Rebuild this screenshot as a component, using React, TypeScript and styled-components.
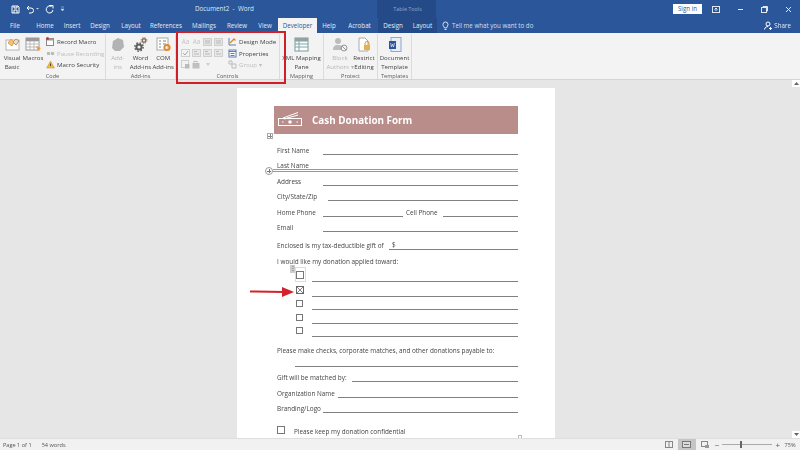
import * as React from 'react'
import styled, { createGlobalStyle } from 'styled-components'

const Global = createGlobalStyle`
  html, body { margin: 0; padding: 0; width: 800px; height: 450px; overflow: hidden; }
  body { font-family: "Open Sans", "Liberation Sans", sans-serif; background: #e6e6e6; }
`

const Root = styled.div`
  position: relative;
  width: 800px;
  height: 450px;
  display: flex;
  flex-direction: column;
  overflow: hidden;
  filter: blur(0.3px);
`

const TitleBar = styled.div`
  height: 18px;
  background: #2b579a;
  color: #dfe7f3;
  display: flex;
  align-items: center;
  font-size: 6.3px;
`

const Qat = styled.div`
  width: 377px;
  display: flex;
  align-items: center;
  gap: 6px;
  padding-left: 11px;
  box-sizing: border-box;
`

const DocTitle = styled.div`
  position: absolute;
  left: 195px;
  top: 3px;
  line-height: 11px;
  white-space: pre;
`

const ContextTitle = styled.div`
  width: 59px;
  height: 18px;
  background: #244b87;
  color: #8fa7cc;
  font-size: 5.4px;
  line-height: 18px;
  text-align: center;
  padding-left: 2px;
  box-sizing: border-box;
`

const WindowControls = styled.div`
  margin-left: auto;
  display: flex;
  align-items: center;
  height: 18px;
`

const SignIn = styled.div`
  width: 29px;
  height: 10px;
  background: #fff;
  color: #2b579a;
  font-size: 6.2px;
  line-height: 10px;
  text-align: center;
  margin-right: 2px;
`

const WinButton = styled.div`
  width: 24px;
  display: flex;
  justify-content: center;
`

const TabBar = styled.div`
  height: 15px;
  background: #2b579a;
  display: flex;
  align-items: stretch;
  font-size: 6.2px;
  color: #e4ebf5;
`

const Tab = styled.div<{ $w: number; $active?: boolean; $context?: boolean }>`
  width: ${p => p.$w}px;
  text-align: center;
  line-height: 15px;
  white-space: nowrap;
  background: ${p => (p.$active ? '#f3f3f3' : p.$context ? '#244b87' : 'transparent')};
  color: ${p => (p.$active ? '#2b579a' : 'inherit')};
`

const TellMe = styled.div`
  margin-left: 5px;
  display: flex;
  align-items: center;
  gap: 3px;
  line-height: 15px;
  color: #d5dff0;
`

const Share = styled.div`
  margin-left: auto;
  padding-right: 9px;
  display: flex;
  align-items: center;
  gap: 2px;
`

const Ribbon = styled.div`
  height: 47px;
  box-sizing: border-box;
  background: #f3f3f3;
  border-bottom: 1px solid #d4d4d4;
  display: flex;
  font-size: 6.1px;
  color: #444;
  position: relative;
`

const Group = styled.div<{ $w: number }>`
  width: ${p => p.$w}px;
  box-sizing: border-box;
  height: 45px;
  margin-top: 1px;
  border-right: 1px solid #dcdcdc;
  display: flex;
  flex-direction: column;
`

const GroupBody = styled.div<{ $pad?: number }>`
  flex: 1;
  display: flex;
  padding-left: ${p => p.$pad ?? 0}px;
`

const GroupLabel = styled.div`
  height: 10px;
  line-height: 11px;
  font-size: 5.6px;
  text-align: center;
  color: #5a5a5a;
  white-space: nowrap;
`

const BigButton = styled.div<{ $w: number; $off?: boolean }>`
  width: ${p => p.$w}px;
  display: flex;
  flex-direction: column;
  align-items: center;
  color: ${p => (p.$off ? '#b5b5b5' : '#444')};
  white-space: pre;
  text-align: center;
  line-height: 8.5px;
  padding-top: 3px;
  svg { margin-bottom: 2px; flex: none; }
`

const SmallColumn = styled.div<{ $left?: number }>`
  display: flex;
  flex-direction: column;
  margin-left: ${p => p.$left ?? 0}px;
  padding-top: 2px;
  gap: 0;
`

const SmallButton = styled.div<{ $off?: boolean }>`
  height: 11.5px;
  display: flex;
  align-items: center;
  gap: 2px;
  white-space: nowrap;
  color: ${p => (p.$off ? '#bdbdbd' : '#444')};
`

const ControlGrid = styled.div`
  display: grid;
  grid-template-columns: repeat(4, 11px);
  grid-auto-rows: 11.5px;
  align-items: center;
  justify-items: center;
  padding-top: 2px;
  margin-left: 4px;
  width: 48px;
`

const FontGlyph = styled.span`
  color: #c4c4c4;
  font-size: 6.5px;
`

const DocArea = styled.div`
  flex: 1;
  min-height: 0;
  display: flex;
  background: #e6e6e6;
  position: relative;
`

const Page = styled.div`
  width: 318px;
  margin: 8px 0 0 237px;
  background: #fff;
  overflow: hidden;
  padding: 18px 37px 0;
  box-sizing: border-box;
  flex: none;
  position: relative;
  font-size: 6.4px;
  color: #444;
`

const Banner = styled.div`
  height: 28px;
  background: #b98d8a;
  display: flex;
  align-items: center;
  color: #fff;
  font-weight: 700;
  font-size: 9.9px;
  padding-left: 4px;
  gap: 10px;
`

const Row = styled.div<{ $h?: number; $pad?: number }>`
  height: ${p => p.$h ?? 15.4}px;
  display: flex;
  align-items: flex-end;
  padding-left: ${p => p.$pad ?? 3}px;
  white-space: nowrap;
`

const Label = styled.div<{ $w?: number; $gap?: number }>`
  width: ${p => (p.$w ? `${p.$w}px` : 'auto')};
  flex: none;
  box-sizing: border-box;
  line-height: 9px;
  padding-left: ${p => p.$gap ?? 0}px;
`

const Line = styled.div<{ $w?: number }>`
  flex: ${p => (p.$w ? 'none' : 1)};
  width: ${p => (p.$w ? `${p.$w}px` : 'auto')};
  border-bottom: 1px solid #808080;
  line-height: 9px;
  padding-left: 3px;
  box-sizing: border-box;
`

const Box = styled.div<{ $w: number }>`
  width: ${p => p.$w}px;
  flex: none;
  display: flex;
  align-items: center;
  height: 9px;
  margin-bottom: 2px;
`

const Square = styled.div<{ $size?: number }>`
  width: ${p => p.$size ?? 7}px;
  height: ${p => p.$size ?? 7}px;
  border: 1px solid #777;
  box-sizing: border-box;
  background: #fff;
  flex: none;
`

const Control = styled.div`
  position: absolute;
  left: 58px;
  top: 179px;
  width: 11px;
  height: 15px;
  border: 1px solid #ddd;
  box-sizing: border-box;
`

const ControlTag = styled.div`
  position: absolute;
  left: 53px;
  top: 177px;
  width: 5px;
  height: 8px;
  background: #ccc;
  color: #555;
  font-size: 6px;
  line-height: 7px;
  text-align: center;
`

const MoveHandle = styled.div`
  position: absolute;
  left: 30px;
  top: 45px;
  width: 6px;
  height: 6px;
  border: 1px solid #aaa;
  box-sizing: border-box;
  background:
    linear-gradient(#888, #888) center / 4px 1px no-repeat,
    linear-gradient(#888, #888) center / 1px 4px no-repeat;
`

const InsertLine = styled.div`
  position: absolute;
  left: 36px;
  right: 37px;
  top: 81px;
  border-bottom: 3px double #999;
`

const InsertHandle = styled.div`
  position: absolute;
  left: 28px;
  top: 79px;
  width: 8px;
  height: 8px;
  border: 1px solid #999;
  border-radius: 50%;
  box-sizing: border-box;
  background:
    linear-gradient(#777, #777) center / 4px 1px no-repeat,
    linear-gradient(#777, #777) center / 1px 4px no-repeat, #fff;
`

const ResizeHandle = styled.div`
  position: absolute;
  left: 281px;
  bottom: 0;
  width: 4px;
  height: 3px;
  border: 1px solid #bbb;
  border-bottom: 0;
  box-sizing: border-box;
`

const ScrollButton = styled.div<{ $bottom?: boolean }>`
  position: absolute;
  right: 0;
  ${p => (p.$bottom ? 'bottom: 0;' : 'top: 0;')}
  width: 8px;
  height: 7px;
  background: #fff;
  display: flex;
  align-items: center;
  justify-content: center;
`

const StatusBar = styled.div`
  height: 12px;
  background: #f1f1f1;
  border-top: 1px solid #dedede;
  box-sizing: border-box;
  display: flex;
  align-items: center;
  font-size: 5.6px;
  color: #555;
  padding-left: 3px;
`

const StatusGap = styled.div`
  width: 10px;
`

const StatusRight = styled.div`
  margin-left: auto;
  display: flex;
  align-items: center;
  height: 100%;
`

const ViewButton = styled.div<{ $active?: boolean }>`
  width: 18px;
  height: 100%;
  display: flex;
  align-items: center;
  justify-content: center;
  background: ${p => (p.$active ? '#c6c6c6' : 'transparent')};
`

const ZoomSlider = styled.div`
  position: relative;
  width: 50px;
  height: 1px;
  margin: 0 3px;
  background: #aaa;
`

const ZoomThumb = styled.div`
  position: absolute;
  left: 18px;
  top: -3px;
  width: 2px;
  height: 7px;
  background: #666;
`

const ZoomSign = styled.div<{ $left?: number }>`
  font-size: 8px;
  line-height: 10px;
  color: #555;
  margin-left: ${p => p.$left ?? 0}px;
`

const ZoomValue = styled.div`
  width: 20px;
  text-align: center;
`

const RedBox = styled.div`
  position: absolute;
  left: 176px;
  top: 31px;
  width: 110px;
  height: 53px;
  border: 2.4px solid #cf2027;
  box-sizing: border-box;
`

const Arrow = styled.svg`
  position: absolute;
  left: 249px;
  top: 284px;
`

const Ico = ({ w = 15, h = 15, children }: { w?: number; h?: number; children: React.ReactNode }) => (
  <svg width={w} height={h} viewBox={`0 0 ${w} ${h}`} fill="none">{children}</svg>
)

const tabs: [string, number][] = [
  ['File', 30], ['Home', 30], ['Insert', 24], ['Design', 32], ['Layout', 30], ['References', 40],
  ['Mailings', 36], ['Review', 30], ['View', 26]
]

const disabledIcon = '#cfcfcf'

const ControlIcons = () => (
  <ControlGrid>
    <FontGlyph>Aa</FontGlyph>
    <FontGlyph>Aa</FontGlyph>
    {[0, 1].map(i => (
      <Ico key={i} w={9} h={8}><rect x=".5" y=".5" width="8" height="7" fill="#e2e2e2" stroke={disabledIcon} /><path d="M2 3h5M2 5h5" stroke="#bbb" /></Ico>
    ))}
    <Ico w={9} h={8}><rect x=".5" y=".5" width="8" height="7" stroke={disabledIcon} /><path d="M2 4l2 2 3-4" stroke="#aaa" /></Ico>
    {[0, 1, 2].map(i => (
      <Ico key={i} w={9} h={8}><rect x=".5" y=".5" width="8" height="7" fill="#e8e8e8" stroke={disabledIcon} /><path d="M2 2.500h3M2 5h5" stroke="#bbb" /></Ico>
    ))}
    <Ico w={9} h={9}><rect x=".5" y=".5" width="7" height="7" stroke={disabledIcon} /><rect x="4" y="4" width="4.500" height="4.500" fill="#bbb" /></Ico>
    <Ico w={9} h={8}><rect x=".5" y="2" width="7" height="5.500" fill="#c0c0c0" /><rect x="2" y=".5" width="3" height="2" stroke="#bbb" /></Ico>
    <Ico w={4} h={3}><path d="M0 0h4L2 3z" fill="#ccc" /></Ico>
  </ControlGrid>
)

const App = () => {
  return (
    <Root>
      <Global />
      <TitleBar>
        <Qat>
          <Ico w={9} h={9}><path d="M1 1h6l1 1v6H1z" stroke="#fff" /><path d="M3 1v2h3V1M3 8V5h3v3" stroke="#fff" /></Ico>
          <Ico w={13} h={9}><path d="M3 1L1 3l2 2M1 3h4a2.500 2.500 0 010 5H3" stroke="#fff" /><path d="M10 3h3l-1.500 1.500z" fill="#cdd9ec" /></Ico>
          <Ico w={9} h={9}><path d="M6.500 1.500A3.500 3.500 0 105 8a3.500 3.500 0 003-3" stroke="#fff" /><path d="M4 .5h4v3" stroke="#fff" /></Ico>
          <Ico w={5} h={6}><path d="M1 1h3M1 3h3L2.500 5z" fill="#cdd9ec" stroke="#cdd9ec" strokeWidth=".5" /></Ico>
        </Qat>
        <DocTitle>Document2  -  Word</DocTitle>
        <ContextTitle>Table Tools</ContextTitle>
        <WindowControls>
          <SignIn>Sign in</SignIn>
          <WinButton><Ico w={8} h={7}><rect x=".5" y=".5" width="7" height="6" stroke="#dfe7f3" /><path d="M4 5V2M2.500 3.500L4 2l1.500 1.500" stroke="#dfe7f3" /></Ico></WinButton>
          <WinButton><Ico w={7} h={3}><path d="M1 1.500h5" stroke="#dfe7f3" /></Ico></WinButton>
          <WinButton><Ico w={7} h={7}><rect x=".5" y="1.500" width="5" height="5" stroke="#dfe7f3" /><path d="M2 1V.5h4.500V5H6" stroke="#dfe7f3" /></Ico></WinButton>
          <WinButton><Ico w={7} h={7}><path d="M1 1l5 5M6 1L1 6" stroke="#dfe7f3" /></Ico></WinButton>
        </WindowControls>
      </TitleBar>
      <TabBar>
        {tabs.map(([name, w]) => <Tab key={name} $w={w}>{name}</Tab>)}
        <Tab $w={39} $active>Developer</Tab>
        <Tab $w={24}>Help</Tab>
        <Tab $w={37}>Acrobat</Tab>
        <Tab $w={30} $context>Design</Tab>
        <Tab $w={29} $context>Layout</Tab>
        <TellMe>
          <Ico w={7} h={10}><path d="M2.500 7C2 5.500 1 5 1 3.500a2.500 2.500 0 015 0C6 5 5 5.500 4.500 7zM2.500 8.500h2" stroke="#fff" strokeWidth=".8" /></Ico>
          Tell me what you want to do
        </TellMe>
        <Share>
          <Ico w={8} h={9}><circle cx="4" cy="3" r="2" stroke="#fff" /><path d="M.5 8.500C1 6 2.500 5.500 4 5.500M5 7.500h3M6.500 6v3" stroke="#fff" /></Ico>
          Share
        </Share>
      </TabBar>
      <Ribbon>
        <Group $w={106}>
          <GroupBody $pad={2}>
            <BigButton $w={20}>
              <Ico><rect x="1" y="3" width="13" height="10" fill="#fff" stroke="#b5b5b5" /><path d="M3 6l3-4 3 3-2 4z" fill="#f0c27a" stroke="#e2a24a" /><path d="M8 5l3 3 3-4-3-2z" fill="#dfe7c0" stroke="#b98d8a" /></Ico>
              {'Visual\nBasic'}
            </BigButton>
            <BigButton $w={22}>
              <Ico w={17}><rect x="1" y="1" width="13" height="12" fill="#fff" stroke="#9a9a9a" /><path d="M1 4h13M1 7h13M1 10h13M5 4v9M9 4v9" stroke="#bbb" /><rect x="1" y="1" width="13" height="3" fill="#9a9a9a" /><path d="M11 9l5 2-3 3z" fill="#ef9a3d" /></Ico>
              Macros
            </BigButton>
            <SmallColumn $left={2}>
              <SmallButton><Ico w={9} h={9}><rect x=".5" y="1.500" width="7" height="7" fill="#fff" stroke="#888" /><path d="M.5 1.500h7v2h-7z" fill="#999" /><circle cx="1.500" cy="1.500" r="1.500" fill="#c33" /></Ico>Record Macro</SmallButton>
              <SmallButton $off><Ico w={9} h={9}><path d="M1 3h3v3H1z" fill="#bbb" /><circle cx="6.500" cy="4.500" r="1.800" fill="#bbb" /></Ico>Pause Recording</SmallButton>
              <SmallButton><Ico w={9} h={9}><path d="M4.500 1L8.500 8h-8z" fill="#f0b93a" stroke="#c8922a" strokeWidth=".5" /><path d="M4.500 3.500v2.500" stroke="#444" /></Ico>Macro Security</SmallButton>
            </SmallColumn>
          </GroupBody>
          <GroupLabel>Code</GroupLabel>
        </Group>
        <Group $w={70}>
          <GroupBody>
            <BigButton $w={24} $off>
              <Ico><path d="M3 4l5-3 5 2 1 7-4 4H5l-3-3z" fill="#b3b3b3" /></Ico>
              {'Add-\nins'}
            </BigButton>
            <BigButton $w={22}>
              <Ico>
                <circle cx="6" cy="10" r="2.600" stroke="#5d5d5d" strokeWidth="2" />
                <circle cx="6" cy="10" r="4.200" stroke="#5d5d5d" strokeWidth="1.400" strokeDasharray="1.600 1.700" />
                <circle cx="11" cy="3.500" r="1.700" stroke="#8a7355" strokeWidth="1.400" />
                <circle cx="11" cy="3.500" r="2.900" stroke="#8a7355" strokeWidth="1" strokeDasharray="1.200 1.100" />
              </Ico>
              {'Word\nAdd-ins'}
            </BigButton>
            <BigButton $w={24}>
              <Ico><rect x="1" y="1" width="11" height="12" fill="#fff" stroke="#aaa" /><path d="M3 4h2M7 4h3M3 7h2M7 7h3M3 10h2" stroke="#6a8a9a" /><circle cx="11" cy="10.500" r="2.600" stroke="#e8892b" strokeWidth="2" /></Ico>
              {'COM\nAdd-ins'}
            </BigButton>
          </GroupBody>
          <GroupLabel>Add-ins</GroupLabel>
        </Group>
        <Group $w={104}>
          <GroupBody>
            <ControlIcons />
            <SmallColumn>
              <SmallButton><Ico w={9} h={9}><path d="M1 1v7h7" stroke="#5b7fb5" /><path d="M2 6l4-4 1.500 1.500" stroke="#d98a2c" strokeWidth="1.400" /></Ico>Design Mode</SmallButton>
              <SmallButton><Ico w={9} h={9}><rect x="1" y="1" width="7" height="7" fill="#fff" stroke="#5b7fb5" /><path d="M1 2.500h7M2.500 4.500h4M2.500 6.500h4" stroke="#5b7fb5" /></Ico>Properties</SmallButton>
              <SmallButton $off><Ico w={9} h={9}><path d="M1 1h3v3H1zM4 4h4v4H4z" stroke="#bbb" /></Ico>Group ▾</SmallButton>
            </SmallColumn>
          </GroupBody>
          <GroupLabel>Controls</GroupLabel>
        </Group>
        <Group $w={44}>
          <GroupBody>
            <BigButton $w={44}>
              <Ico><rect x="1" y="1" width="13" height="13" fill="#fff" stroke="#7a9a9a" /><path d="M1 4h13M1 7h13M1 10h13M5 4v10" stroke="#7aa5a5" /><rect x="1" y="1" width="13" height="3" fill="#8fa5a5" /></Ico>
              {'XML Mapping\nPane'}
            </BigButton>
          </GroupBody>
          <GroupLabel>Mapping</GroupLabel>
        </Group>
        <Group $w={54}>
          <GroupBody $pad={4}>
            <BigButton $w={24} $off>
              <Ico w={16}><circle cx="6" cy="4" r="3" fill="#bcbcbc" /><path d="M1 13c0-4 2-5 5-5s4 1 4 2v3z" fill="#bcbcbc" /><circle cx="12" cy="11" r="3" stroke="#999" /><path d="M10 9l4 4" stroke="#999" /></Ico>
              {'Block\nAuthors ▾'}
            </BigButton>
            <BigButton $w={24}>
              <Ico w={14}><path d="M2 1h6l3 3v10H2z" fill="#fff" stroke="#aaa" /><rect x="7" y="8" width="6" height="5" fill="#e8b04a" /><path d="M8 8V6.500a2 2 0 014 0V8" stroke="#d09a30" /></Ico>
              {'Restrict\nEditing'}
            </BigButton>
          </GroupBody>
          <GroupLabel>Protect</GroupLabel>
        </Group>
        <Group $w={34}>
          <GroupBody>
            <BigButton $w={34}>
              <Ico w={14}><rect x="3" y="0.5" width="10" height="14" fill="#e8eef7" stroke="#8fa7cc" /><rect x="1" y="4" width="7" height="8" fill="#2b579a" /><path d="M2.500 6l1 4 1-3 1 3 1-4" stroke="#fff" strokeWidth=".6" /></Ico>
              {'Document\nTemplate'}
            </BigButton>
          </GroupBody>
          <GroupLabel>Templates</GroupLabel>
        </Group>
      </Ribbon>
      <DocArea>
        <Page>
          <Banner>
            <Ico w={24} h={20}>
              <path d="M5 8L20 2.500M6 9L20 5" stroke="#fff" />
              <rect x=".5" y="8.500" width="23" height="7" stroke="#fff" />
              <circle cx="12" cy="12" r="1.800" fill="#fff" />
              <path d="M4 12h1.500M18.500 12H20" stroke="#fff" />
            </Ico>
            Cash Donation Form
          </Banner>
          <Row $h={21}><Label $w={46}>First Name</Label><Line /></Row>
          <Row><Label $w={46}>Last Name</Label></Row>
          <Row><Label $w={46}>Address</Label><Line /></Row>
          <Row><Label $w={51}>City/State/Zip</Label><Line /></Row>
          <Row><Label $w={46}>Home Phone</Label><Line $w={80} /><Label $w={40} $gap={3}>Cell Phone</Label><Line /></Row>
          <Row><Label $w={46}>Email</Label><Line /></Row>
          <Row $h={18}><Label $w={112}>Enclosed is my tax-deductible gift of</Label><Line>$</Line></Row>
          <Row $h={16.5}><Label>I would like my donation applied toward:</Label></Row>
          <Row $h={15.5} $pad={22}><Box $w={16}><Square $size={8} /></Box><Line /></Row>
          <Row $h={15} $pad={22}>
            <Box $w={16}>
              <Ico w={8} h={8}><rect x=".5" y=".5" width="7" height="7" stroke="#666" /><path d="M.5.5l7 7M7.500.5l-7 7" stroke="#666" strokeWidth=".8" /></Ico>
            </Box>
            <Line />
          </Row>
          <Row $h={13.5} $pad={22}><Box $w={16}><Square /></Box><Line /></Row>
          <Row $h={13.5} $pad={22}><Box $w={16}><Square /></Box><Line /></Row>
          <Row $h={13.5} $pad={22}><Box $w={16}><Square /></Box><Line /></Row>
          <Row $h={17.5}><Label>Please make checks, corporate matches, and other donations payable to:</Label></Row>
          <Row $h={12} $pad={21}><Line /></Row>
          <Row><Label $w={75}>Gift will be matched by:</Label><Line /></Row>
          <Row><Label $w={61}>Organization Name</Label><Line /></Row>
          <Row><Label $w={46}>Branding/Logo</Label><Line /></Row>
          <Row $h={23}><Box $w={17}><Square $size={8} /></Box><Label>Please keep my donation confidential</Label></Row>
          <ResizeHandle />
          <MoveHandle />
          <InsertLine />
          <InsertHandle />
          <ControlTag>⋮</ControlTag>
          <Control />
        </Page>
        <ScrollButton><Ico w={5} h={3}><path d="M2.500 0L5 3H0z" fill="#666" /></Ico></ScrollButton>
        <ScrollButton $bottom><Ico w={5} h={3}><path d="M2.500 3L5 0H0z" fill="#666" /></Ico></ScrollButton>
      </DocArea>
      <StatusBar>
        Page 1 of 1
        <StatusGap />
        54 words
        <StatusRight>
          <ViewButton><Ico w={8} h={7}><rect x=".5" y=".5" width="7" height="6" stroke="#888" /><path d="M4 .5v6" stroke="#888" /></Ico></ViewButton>
          <ViewButton $active><Ico w={9} h={7}><rect x=".5" y=".5" width="8" height="6" fill="#ddd" stroke="#777" /><path d="M2 3.500h5" stroke="#777" /></Ico></ViewButton>
          <ViewButton><Ico w={8} h={7}><rect x=".5" y=".5" width="6" height="5" stroke="#888" /><path d="M4 4h4v3H4z" fill="#999" /></Ico></ViewButton>
          <ZoomSign $left={1}>−</ZoomSign>
          <ZoomSlider><ZoomThumb /></ZoomSlider>
          <ZoomSign>+</ZoomSign>
          <ZoomValue>75%</ZoomValue>
        </StatusRight>
      </StatusBar>
      <RedBox />
      <Arrow width="48" height="16" viewBox="0 0 48 16">
        <path d="M1 7.500L36 8" stroke="#d2232a" strokeWidth="2" />
        <path d="M33 3l12 5-12 5z" fill="#d2232a" />
      </Arrow>
    </Root>
  )
}

export default App
